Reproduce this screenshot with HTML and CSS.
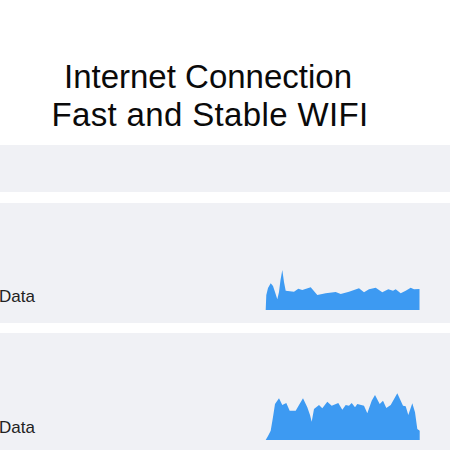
FILE: index.html
```html
<!DOCTYPE html>
<html>
<head>
<meta charset="utf-8">
<link rel="stylesheet" href="styles.css">
</head>
<body>
<div class="page">
  <h1 class="title">Internet Connection<br><span class="sub">Fast and Stable WIFI</span></h1>
  <div class="band band-top"></div>
  <div class="band band-row band-first">
    <span class="label">Data</span>
    <svg class="chart" width="156" height="42" viewBox="266 268 156 42">
      <path fill="#3d9af2" d="M266.7,310 L267.3,295 L269,288 L271.7,283.3 L274,286 L276,292 L278.3,299.3 L280,292 L281.5,280 L283.3,270 L285,282 L286.7,290.7 L295,291.7 L299.3,288.7 L303.3,290 L311.7,287.3 L318.3,295 L326.7,293.3 L336.7,292 L341.7,294 L350,291.7 L360,288.3 L365,292.3 L370,289.3 L376.7,287.7 L383.3,292.3 L389.3,289.3 L394,290.7 L396.7,289.3 L401.7,293.3 L406.7,290.7 L411.7,287.7 L415,289.3 L420.5,289 L420.5,310 Z"/>
    </svg>
  </div>
  <div class="band band-row">
    <span class="label">Data</span>
    <svg class="chart" width="156" height="50" viewBox="266 392 156 50">
      <path fill="#3d9af2" d="M266.7,441 L269,437 L271.7,431.7 L274,418 L276,405 L280,399.3 L283.3,406 L287.3,404 L290.7,411.7 L296.7,411.7 L300,406 L304,399.3 L308.3,408.3 L311,416 L312.7,422.7 L315,410 L320,406 L323.3,409.3 L328.3,402.7 L332.7,406.7 L339.3,404 L343.3,410.7 L346.7,406 L350,406.7 L352.7,404 L356,408.3 L358.3,405 L365,406.7 L368.3,414.3 L372.7,401.7 L376,396 L380.7,405 L384,401.7 L387.3,409 L391.7,406 L398.3,394.3 L404,406.7 L406.7,407.3 L409.3,416 L413.3,404.3 L416,413.3 L418.3,430 L420.7,431.7 L420.7,441 Z"/>
    </svg>
  </div>
</div>
</body>
</html>
```

FILE: styles.css
```css
html, body {
  margin: 0;
  padding: 0;
  background: #ffffff;
  overflow: hidden;
}

.page {
  width: 450px;
  height: 450px;
  display: flex;
  flex-direction: column;
  font-family: "Liberation Sans", Arial, sans-serif;
}

.title {
  width: 416px;
  margin: 58px 0 11px 0;
  font-size: 33px;
  line-height: 38px;
  font-weight: normal;
  text-align: center;
  color: #0a0a0a;
}

.sub {
  letter-spacing: 0.35px;
  margin-left: 4px;
}

.band {
  background: #f0f1f5;
  flex-shrink: 0;
}

.band-top {
  height: 47px;
  margin-bottom: 11px;
}

.band-row {
  height: 120px;
  margin-bottom: 10px;
  display: flex;
  align-items: flex-end;
  justify-content: space-between;
  padding: 0 29px 12px 0;
  box-sizing: border-box;
}

.band-first {
  padding-bottom: 13px;
}

.label {
  font-size: 17px;
  line-height: 20px;
  color: #222222;
  margin-left: -1px;
  margin-bottom: 3px;
}

.chart {
  display: block;
}
```
